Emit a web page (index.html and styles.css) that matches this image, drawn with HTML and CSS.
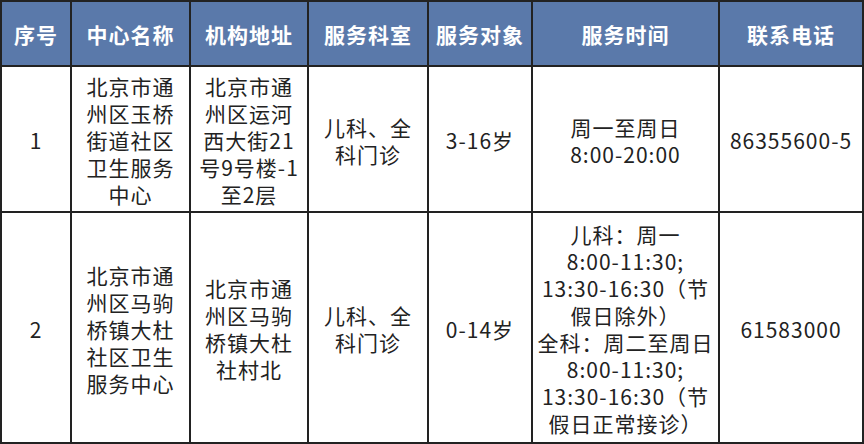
FILE: index.html
```html
<!DOCTYPE html>
<html lang="zh">
<head>
<meta charset="utf-8">
<link rel="stylesheet" href="styles.css">
</head>
<body>
<table class="tbl">
  <colgroup>
    <col class="c1"><col class="c2"><col class="c3"><col class="c4"><col class="c5"><col class="c6"><col class="c7">
  </colgroup>
  <thead>
    <tr class="head">
      <th>序号</th><th>中心名称</th><th>机构地址</th><th>服务科室</th><th>服务对象</th><th>服务时间</th><th>联系电话</th>
    </tr>
  </thead>
  <tbody>
    <tr class="r1">
      <td>1</td>
      <td>北京市通<br>州区玉桥<br>街道社区<br>卫生服务<br>中心</td>
      <td>北京市通<br>州区运河<br>西大街21<br>号9号楼-1<br>至2层</td>
      <td>儿科、全<br>科门诊</td>
      <td>3-16岁</td>
      <td>周一至周日<br>8:00-20:00</td>
      <td>86355600-5</td>
    </tr>
    <tr class="r2">
      <td>2</td>
      <td>北京市通<br>州区马驹<br>桥镇大杜<br>社区卫生<br>服务中心</td>
      <td>北京市通<br>州区马驹<br>桥镇大杜<br>社村北</td>
      <td>儿科、全<br>科门诊</td>
      <td>0-14岁</td>
      <td>儿科：周一<br>8:00-11:30;<br>13:30-16:30（节<br>假日除外）<br>全科：周二至周日<br>8:00-11:30;<br>13:30-16:30（节<br>假日正常接诊）</td>
      <td>61583000</td>
    </tr>
  </tbody>
</table>
</body>
</html>
```
FILE: styles.css
```css
html, body {
  margin: 0;
  padding: 0;
  background: #ffffff;
}
.tbl {
  border-collapse: collapse;
  table-layout: fixed;
  width: 862px;
  font-family: "Noto Sans CJK SC", "Noto Sans", sans-serif;
  color: #222222;
}
.c1 { width: 70px; }
.c2 { width: 119px; }
.c3 { width: 118px; }
.c4 { width: 120px; }
.c5 { width: 104px; }
.c6 { width: 187px; }
.c7 { width: 144px; }
.tbl th, .tbl td {
  border: 2px solid #222222;
  text-align: center;
  vertical-align: middle;
  padding: 0;
}
.head th {
  background: #5a79aa;
  color: #ffffff;
  font-size: 21px;
  font-weight: bold;
  height: 63px;
  letter-spacing: 1px;
}
.tbl td {
  font-size: 21px;
  line-height: 27px;
  letter-spacing: 1px;
  padding-top: 3px;
}
.r1 td { height: 141px; }
.r2 td { height: 226px; }
```
